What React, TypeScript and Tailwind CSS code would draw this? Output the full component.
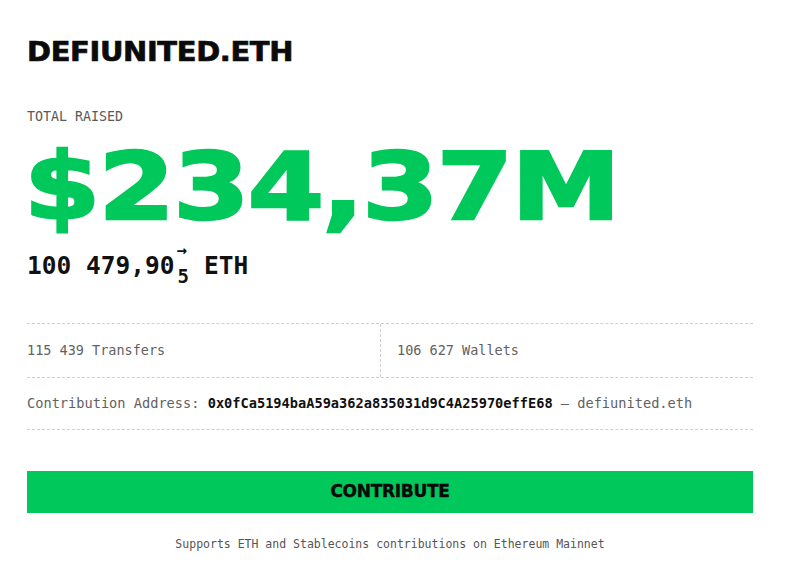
export default function App() {
  return (
    <main className="min-h-[564px] w-[800px] overflow-hidden bg-white text-[#0b0b0b] antialiased">
      <div className="flex w-[726px] flex-col items-start pl-[27px] pt-[36px] box-content">
        {/* name */}
        <h1 className="origin-left scale-x-[1.07] text-[27px] font-bold leading-[32px] tracking-[-0.3px] [-webkit-text-stroke:0.7px_#0b0b0b] [font-family:'DejaVu_Sans',sans-serif]">
          DEFIUNITED.ETH
        </h1>

        <p className="mt-[39px] text-[13.3px] leading-[20px] text-[#5a5a5a] [font-family:'DejaVu_Sans_Mono',monospace]">
          TOTAL RAISED
        </p>

        <p className="-ml-[3px] mt-[14px] origin-left scale-x-[1.18] text-[93px] font-bold leading-none tracking-[-1.5px] text-[#00c85a] [-webkit-text-stroke:2.5px_#00c85a] [font-family:'DejaVu_Sans',sans-serif]">
          $234,37M
        </p>

        <p className="mt-[17px] flex items-start text-[24.5px] font-bold leading-[30px] text-[#111] [font-family:'DejaVu_Sans_Mono',monospace]">
          <span>100 479,90</span>
          <span className="relative inline-block h-[34px] w-[1ch]">
            <span className="absolute left-[2px] top-[-9px] text-[17px] leading-[17px]">→</span>
            <span className="absolute left-[3px] top-[16px] text-[19px] leading-[19px]">5</span>
          </span>
          <span>&nbsp;ETH</span>
        </p>

        {/* stats */}
        <div className="mt-[38px] flex w-[726px] flex-col border-t border-dashed border-[#cfcfcf] text-[13.5px] text-[#626262] [font-family:'DejaVu_Sans_Mono',monospace]">
          <div className="flex h-[54px] border-b border-dashed border-[#cfcfcf]">
            <div className="flex w-[354px] items-center border-r border-dashed border-[#cfcfcf]">
              115 439 Transfers
            </div>
            <div className="flex items-center pl-[16px]">106 627 Wallets</div>
          </div>
          <div className="flex h-[52px] items-center border-b border-dashed border-[#cfcfcf] text-[13.65px] whitespace-nowrap">
            <span>Contribution Address:&nbsp;</span>
            <span className="font-bold text-[#111]">0x0fCa5194baA59a362a835031d9C4A25970effE68</span>
            <span>&nbsp;— defiunited.eth</span>
          </div>
        </div>

        <button className="mt-[41px] flex h-[42px] w-[726px] items-center justify-center bg-[#00c85a] text-[17px] font-bold tracking-[-0.3px] text-[#0a0a0a] [-webkit-text-stroke:0.4px_#0a0a0a] [font-family:'DejaVu_Sans',sans-serif]">
          CONTRIBUTE
        </button>

        <p className="mt-[23px] w-[726px] text-center text-[11.5px] leading-[16px] text-[#555] [font-family:'DejaVu_Sans_Mono',monospace]">
          Supports ETH and Stablecoins contributions on Ethereum Mainnet
        </p>
      </div>
    </main>
  );
}
